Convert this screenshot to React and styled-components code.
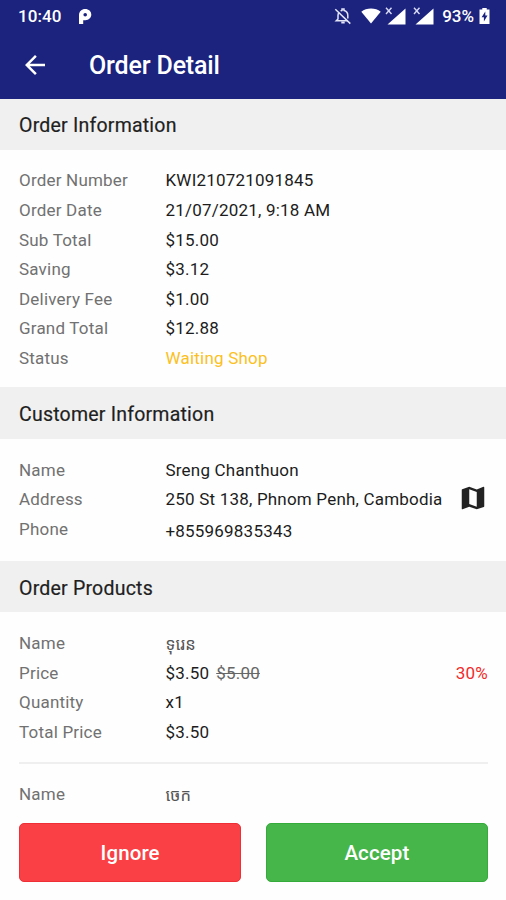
import React from "react";
import styled, { createGlobalStyle } from "styled-components";
import { MdArrowBack, MdMap } from "react-icons/md";

const GlobalStyle = createGlobalStyle`
  * {
    box-sizing: border-box;
  }

  body {
    margin: 0;
    background: #fff;
    font-family: Roboto, "Noto Sans Khmer", "Noto Sans", sans-serif;
  }
`;

const Screen = styled.div`
  display: flex;
  flex-direction: column;
  width: 506px;
  height: 900px;
  overflow: hidden;
  background: #fefefe;
`;

const Header = styled.header`
  flex: none;
  height: 98.5px;
  color: #fff;
  background: #1b237e;
`;

const StatusBar = styled.div`
  display: flex;
  align-items: center;
  height: 32px;
  padding: 0 16px 0 18px;
  font-size: 17px;
  font-weight: 500;
`;

const Clock = styled.span`
  width: 60px;
  letter-spacing: 0.1px;
`;

const StatusIcons = styled.div`
  display: flex;
  align-items: center;
  margin-left: auto;
`;

const SignalGroup = styled.div`
  display: flex;
  gap: 7px;
  margin: 0 8px 0 4px;
`;

const Battery = styled.span`
  margin-right: 5px;
`;

const TitleBar = styled.div`
  display: flex;
  align-items: center;
  height: 66px;
  padding-left: 20px;
`;

const Title = styled.h1`
  margin: 0 0 0 39px;
  font-size: 25px;
  font-weight: 500;
  letter-spacing: -0.15px;
`;

const SectionTitle = styled.h2`
  flex: none;
  display: flex;
  align-items: center;
  height: ${({ height }) => height}px;
  margin: 0;
  padding: 3px 19px 0;
  color: #1f1f1f;
  background: #f0f0f0;
  font-size: 19.5px;
  font-weight: 400;
  letter-spacing: 0.22px;
  -webkit-text-stroke: 0.2px;
`;

const Details = styled.div`
  flex: none;
  height: ${({ height }) => height}px;
  padding: ${({ top }) => top || 15.7}px 18px 0 19px;
`;

const Row = styled.div`
  display: flex;
  align-items: center;
  height: 29.55px;
  font-size: 17px;
  letter-spacing: 0.2px;
  white-space: nowrap;
`;

const Label = styled.span`
  width: 146.5px;
  color: #717171;
`;

const Value = styled.span`
  padding-top: ${({ drop }) => drop || 0}px;
  color: ${({ color }) => color || "#1c1c1c"};
`;

const KhmerValue = styled(Value)`
  color: #555;
  font-size: 16.5px;
`;

const OldPrice = styled.span`
  margin-left: 7px;
  color: #666;
  text-decoration: line-through;
`;

const Discount = styled.span`
  margin-left: auto;
  color: #f22a2a;
`;

const MapIcon = styled(MdMap)`
  flex: none;
  margin: 0 0 2px auto;
  color: #222;
`;

const Divider = styled.hr`
  flex: none;
  width: 469px;
  height: 2px;
  margin: 0 auto;
  border: 0;
  background: #efefef;
`;

const Actions = styled.div`
  flex: none;
  display: flex;
  gap: 24.5px;
  padding: 0 18px 0 19px;
`;

const Button = styled.button`
  flex: 1;
  height: 58.5px;
  padding: 2px 0 0;
  border: 1px solid ${({ edge }) => edge};
  border-radius: 5px;
  color: #fff;
  background: ${({ fill }) => fill};
  font-family: inherit;
  font-size: 20.5px;
  font-weight: 500;
  letter-spacing: 0.1px;
`;

const ParkingIcon = () => (
  <svg width="14" height="17" viewBox="0 0 14 17">
    <path
      fill="#fff"
      fillRule="evenodd"
      d="M1 7.2C1 3.4 3.7 1 7.2 1s6.1 2.3 6.1 5.6-2.6 5.7-5.9 5.7H5.2V16H1ZM7.2 5a1.8 1.8 0 1 0 0 3.6A1.8 1.8 0 0 0 7.2 5Z"
    />
  </svg>
);

const BellIcon = styled.svg`
  margin-right: 9px;
`;

const MutedBellIcon = () => (
  <BellIcon width="18" height="18" viewBox="0 0 18 18" fill="none" stroke="#e4e5f5" strokeWidth="1.5">
    <path d="M5 5.3C4.2 6.3 4 7.2 4 8.5V12l-1.7 1.7h11.3M6.6 3.9c.5-.2.9-.4 1.4-.5V2h2v1.4c2.5.6 3.8 2.6 3.8 5v3" />
    <path d="M1.3 2.2l15 14.4" />
    <path d="M7.3 15.5h3.4" strokeWidth="2" />
  </BellIcon>
);

const WifiIcon = () => (
  <svg width="20" height="16" viewBox="0 0 20 16">
    <path fill="#fff" d="M10 15.5L.3 3.7C3 1.5 6.2.5 10 .5s7 1 9.7 3.2Z" />
  </svg>
);

const SignalIcon = () => (
  <svg width="21" height="19" viewBox="0 0 21 19">
    <path fill="#fff" d="M20.5 1.5v16H2.5Z" />
    <path d="M1 .8l5.5 6.2M6.5.8L1 7" stroke="#d8daf3" strokeWidth="1.4" />
  </svg>
);

const BatteryIcon = () => (
  <svg width="11" height="16" viewBox="0 0 11 16">
    <path fill="#fff" d="M3.3 0h4.4v1.5H10.5V16H.5V1.5h2.8Z" />
    <path fill="#1b237e" d="M6.3 3.5L2.6 9.3h2.3v4.2l3.6-6H6.3Z" />
  </svg>
);

const orderInfo = [
  ["Order Number", "KWI210721091845"],
  ["Order Date", "21/07/2021, 9:18 AM"],
  ["Sub Total", "$15.00"],
  ["Saving", "$3.12"],
  ["Delivery Fee", "$1.00"],
  ["Grand Total", "$12.88"],
  ["Status", "Waiting Shop", "#fcc021"],
];

export default function App() {
  return (
    <>
      <GlobalStyle />
      <Screen>
        <Header>
          <StatusBar>
            <Clock>10:40</Clock>
            <ParkingIcon />
            <StatusIcons>
              <MutedBellIcon />
              <WifiIcon />
              <SignalGroup>
                <SignalIcon />
                <SignalIcon />
              </SignalGroup>
              <Battery>93%</Battery>
              <BatteryIcon />
            </StatusIcons>
          </StatusBar>
          <TitleBar>
            <MdArrowBack size={30} />
            <Title>Order Detail</Title>
          </TitleBar>
        </Header>

        <SectionTitle height={51.5}>Order Information</SectionTitle>
        <Details height={236.8}>
          {orderInfo.map(([label, value, color]) => (
            <Row key={label}>
              <Label>{label}</Label>
              <Value color={color}>{value}</Value>
            </Row>
          ))}
        </Details>

        <SectionTitle height={52.6}>Customer Information</SectionTitle>
        <Details height={121.6}>
          <Row>
            <Label>Name</Label>
            <Value>Sreng Chanthuon</Value>
          </Row>
          <Row>
            <Label>Address</Label>
            <Value>250 St 138, Phnom Penh, Cambodia</Value>
            <MapIcon size={30} />
          </Row>
          <Row>
            <Label>Phone</Label>
            <Value drop={4}>+855969835343</Value>
          </Row>
        </Details>

        <SectionTitle height={51.2}>Order Products</SectionTitle>
        <Details height={150} top={16.4}>
          <Row>
            <Label>Name</Label>
            <KhmerValue>ទុរេន</KhmerValue>
          </Row>
          <Row>
            <Label>Price</Label>
            <Value>$3.50</Value>
            <OldPrice>$5.00</OldPrice>
            <Discount>30%</Discount>
          </Row>
          <Row>
            <Label>Quantity</Label>
            <Value>x1</Value>
          </Row>
          <Row>
            <Label>Total Price</Label>
            <Value>$3.50</Value>
          </Row>
        </Details>
        <Divider />
        <Details height={59} top={15.2}>
          <Row>
            <Label>Name</Label>
            <KhmerValue>ចេក</KhmerValue>
          </Row>
        </Details>

        <Actions>
          <Button fill="#fa4044" edge="#ee3036">Ignore</Button>
          <Button fill="#46b54a" edge="#35ab3b">Accept</Button>
        </Actions>
      </Screen>
    </>
  );
}
